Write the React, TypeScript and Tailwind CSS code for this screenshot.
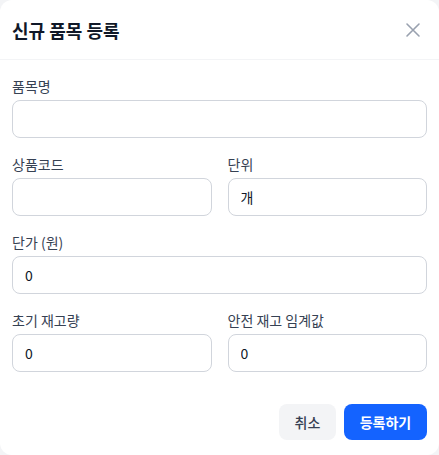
import React from 'react'

const font = { fontFamily: '"Noto Sans CJK KR", "Noto Sans", sans-serif' }

const Field = ({ label, value = '' }: { label: string; value?: string }) => (
  <label className="flex flex-col gap-1">
    <span className="text-sm leading-5 text-gray-700">{label}</span>
    <input
      defaultValue={value}
      className="h-[38px] w-full rounded-lg border border-gray-300 bg-white px-3 text-sm text-gray-900 outline-none"
    />
  </label>
)

const App = () => {
  return (
    <div className="h-[455px] w-[439px] bg-gray-100" style={font}>
      <div className="flex h-full w-full flex-col rounded-xl bg-white">
        {/* header */}
        <div className="flex h-[60px] items-center justify-between border-b border-gray-100 px-3">
          <h2 className="text-lg font-bold text-gray-900">신규 품목 등록</h2>
          <button className="mr-[6px] text-gray-400">
            <svg width="16" height="16" viewBox="0 0 16 16" fill="none" stroke="currentColor" strokeWidth="1.6" strokeLinecap="round">
              <path d="M2 2L14 14M14 2L2 14" />
            </svg>
          </button>
        </div>

        {/* form */}
        <div className="flex flex-col gap-4 px-3 pt-4">
          <Field label="품목명" />
          <div className="grid grid-cols-2 gap-4">
            <Field label="상품코드" />
            <Field label="단위" value="개" />
          </div>
          <Field label="단가 (원)" value="0" />
          <div className="grid grid-cols-2 gap-4">
            <Field label="초기 재고량" value="0" />
            <Field label="안전 재고 임계값" value="0" />
          </div>
        </div>

        {/* footer */}
        <div className="mt-8 flex justify-end gap-2 px-3">
          <button className="h-9 w-[57px] rounded-lg bg-gray-100 text-sm font-medium text-gray-700">취소</button>
          <button className="h-9 w-[83px] rounded-lg bg-[#1463ff] text-sm font-semibold text-white">등록하기</button>
        </div>
      </div>
    </div>
  )
}

export default App
